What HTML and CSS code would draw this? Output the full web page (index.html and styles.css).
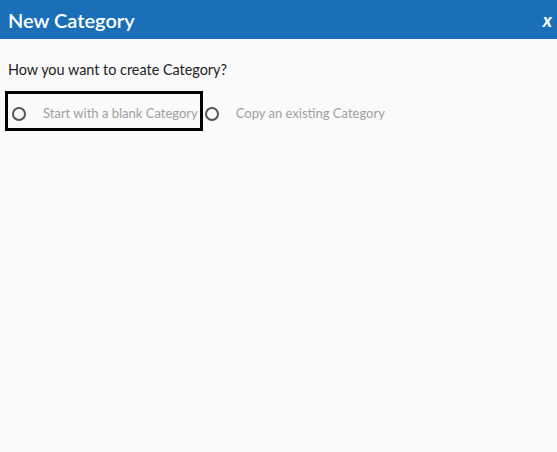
FILE: index.html
```html
<!DOCTYPE html>
<html lang="en">
<head>
<meta charset="utf-8">
<title>New Category</title>
<link rel="stylesheet" href="styles.css">
</head>
<body>
<div class="dialog">
  <header class="dialog-header">
    <h1 class="dialog-title">New Category</h1>
    <button class="close-btn" type="button">x</button>
  </header>
  <main class="dialog-body">
    <p class="question">How you want to create Category?</p>
    <div class="options">
      <label class="option focused">
        <span class="radio"></span>
        <span class="option-label">Start with a blank Category</span>
      </label>
      <label class="option">
        <span class="radio"></span>
        <span class="option-label">Copy an existing Category</span>
      </label>
    </div>
  </main>
</div>
</body>
</html>
```

FILE: styles.css
```css
html, body {
  margin: 0;
  padding: 0;
  height: 100%;
}
body {
  background: #fafafa;
  font-family: Lato, "Liberation Sans", sans-serif;
}
.dialog {
  min-height: 100%;
}
.dialog-header {
  display: flex;
  align-items: center;
  justify-content: space-between;
  height: 39px;
  padding: 0 5px 0 8px;
  background: #1b6fb8;
  color: #fff;
}
.dialog-title {
  margin: 0;
  font-size: 20px;
  font-weight: 600;
  letter-spacing: 0;
}
.close-btn {
  background: none;
  border: 0;
  padding: 0;
  color: #fff;
  font-family: Lato, "Liberation Sans", sans-serif;
  font-size: 19px;
  font-weight: 700;
  font-style: italic;
  line-height: 1;
}
.dialog-body {
  padding: 22px 8px 0 8px;
}
.question {
  margin: 0;
  font-size: 14.4px;
  color: #222;
  line-height: 17px;
}
.options {
  display: flex;
  gap: 1px;
  margin-top: 16px;
}
.option {
  display: flex;
  align-items: center;
  height: 29px;
  padding: 5px 2px 0 4px;
  font-size: 13px;
  color: #a0a0a0;
}
.option.focused {
  outline: 3px solid #000;
}
.radio {
  box-sizing: border-box;
  width: 14px;
  height: 14px;
  border: 2px solid #555;
  border-radius: 50%;
  margin-right: 17px;
  flex: none;
}
.option-label {
  margin-bottom: 2px;
}
```
